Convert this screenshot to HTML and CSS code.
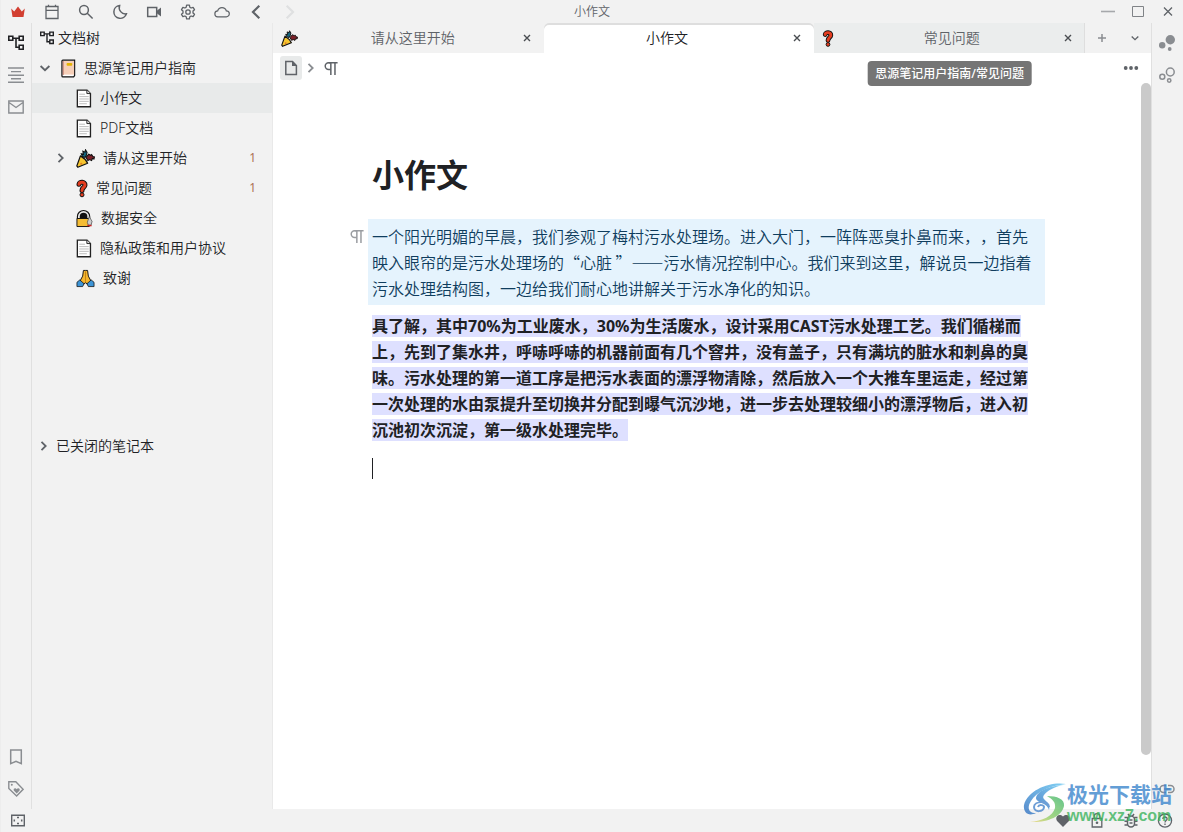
FILE: index.html
```html
<!DOCTYPE html>
<html lang="zh-CN">
<head>
<meta charset="utf-8">
<title>小作文</title>
<link rel="stylesheet" href="styles.css">
</head>
<body>
<svg class="sprite" aria-hidden="true">
  <symbol id="tree" viewBox="0 0 16 16"><path fill="none" stroke="currentColor" stroke-width="1.6" d="M.8 1.300h4v4h-4zM11.200 1.300h4v4h-4zM11.200 10.200h4v4h-4zM5 3.300h6M8 3.300v8.900h3"/></symbol>
  <symbol id="chev-r" viewBox="0 0 16 16"><path fill="none" stroke="currentColor" stroke-width="1.8" d="M5.500 3.800 9.700 8l-4.200 4.200"/></symbol>
  <symbol id="chev-d" viewBox="0 0 16 16"><path fill="none" stroke="currentColor" stroke-width="1.8" d="M3.600 6 8 10.200 12.400 6"/></symbol>
  <symbol id="close" viewBox="0 0 16 16"><path fill="none" stroke="currentColor" stroke-width="1.4" d="m4 5 6 6M10 5l-6 6"/></symbol>
  <symbol id="para" viewBox="0 0 16 16"><path fill="none" stroke="currentColor" stroke-width="1.6" d="M5 1.800h9.500M7.300 1.800V15M11.700 1.800V15"/><path fill="none" stroke="currentColor" stroke-width="1.600" d="M7 1.800H4.900a3.600 3.600 0 0 0 0 7.200h2.400"/></symbol>
  <symbol id="page" viewBox="0 0 16 20"><path fill="#fff" stroke="#222" stroke-width="1.4" d="M1 1.200h10.200l3.600 3.500v14H1z"/><path fill="#ddd" stroke="#222" d="M11 1.200v3.600h3.800"/><path stroke="#bbb" d="M3 5.500h6M3 8h10M3 10.500h10M3 13h10M3 15.500h8"/></symbol>
  <symbol id="party" viewBox="0 0 18 18"><path fill="#15657d" stroke="#111" d="M5 4.500 7 5 6.500 2l2 1L9 .8l1.500 2.400L9.800 6 8.500 8 6 7z"/><path fill="#7b2028" stroke="#111" d="m9.500 8 2.500-3 2 1 .8-.8 1.200 2 1.500.3-.5 2-1.500-.5-.7 2-2-1-1.500 1z"/><path fill="#f6c52f" stroke="#111" stroke-width="1.200" stroke-linejoin="round" d="M4.200 6.500C6 7.500 9.600 10.500 11 13.500L1.700 17.300.8 16z"/><circle cx="5" cy="14" r="1" fill="#e07b25"/></symbol>
  <symbol id="quest" viewBox="0 0 12 18"><path fill="none" stroke="#111" stroke-width="5" stroke-linecap="round" d="M3 4.800C3.300 2 9.300 2 9 5.600 8.800 8 6 8 6 11"/><path fill="none" stroke="#e43d20" stroke-width="3" stroke-linecap="round" d="M3 4.800C3.300 2 9.300 2 9 5.600 8.800 8 6 8 6 11"/><circle cx="6" cy="15.300" r="2" fill="#e43d20" stroke="#111"/></symbol>
</svg>
<div class="app">
  <header class="toolbar">
    <nav class="tools">
      <button class="tool" aria-label="会员"><svg class="i16" viewBox="0 0 16 16"><path fill="#d23f31" d="m1.200 4.500 3 3L8 2.500l3.800 5 3-3L13.500 13h-11z"/></svg></button>
      <button class="tool" aria-label="日记"><svg class="i16" viewBox="0 0 16 16"><path fill="none" stroke="currentColor" stroke-width="1.300" d="M2 2.500h12v12H2zM2 6.300h12M4.500.8v1.700M11.500.8v1.700"/></svg></button>
      <button class="tool" aria-label="搜索"><svg class="i16" viewBox="0 0 16 16"><path fill="none" stroke="currentColor" stroke-width="1.500" d="M10.400 6a4.400 4.400 0 1 1-8.800 0 4.400 4.400 0 0 1 8.800 0zM9.300 9.200l5.300 5.300"/></svg></button>
      <button class="tool" aria-label="主题"><svg class="i16" viewBox="0 0 16 16"><path fill="none" stroke="currentColor" stroke-width="1.500" d="M7.600 1.600a6.400 6.400 0 1 0 6.800 8.200A6.200 6.200 0 0 1 7.600 1.600z"/></svg></button>
      <button class="tool" aria-label="录制"><svg class="i16" viewBox="0 0 16 16"><path fill="none" stroke="currentColor" stroke-width="1.500" d="M1.700 3.500h9v9h-9z"/><path fill="currentColor" d="M10.500 7 15 3.500v9L10.500 9z"/></svg></button>
      <button class="tool" aria-label="设置"><svg class="i16" viewBox="0 0 16 16"><path fill="none" stroke="currentColor" stroke-width="1.300" stroke-linejoin="round" d="M6.600 1.200h2.800l.4 2 1.300.8 2-.7 1.400 2.400L13 7.100v1.800l1.500 1.400-1.400 2.400-2-.7-1.300.8-.4 2H6.600l-.4-2-1.300-.8-2 .7-1.400-2.400L3 8.900V7.100L1.500 5.700l1.400-2.400 2 .7 1.300-.8z"/><circle cx="8" cy="8" r="2.200" fill="none" stroke="currentColor" stroke-width="1.300"/></svg></button>
      <button class="tool" aria-label="云端"><svg class="i16" viewBox="0 0 16 16"><path fill="none" stroke="currentColor" stroke-width="1.200" d="M4 12.800a3 3 0 0 1-.3-6 4.500 4.500 0 0 1 8.600 0 3 3 0 0 1 0 6z"/></svg></button>
      <button class="tool" aria-label="后退"><svg class="i16" viewBox="0 0 16 16"><path fill="none" stroke="currentColor" stroke-width="2.200" d="M11.300 1.800 5 8l6.300 6.200"/></svg></button>
      <button class="tool off" aria-label="前进" disabled><svg class="i16" viewBox="0 0 16 16"><path fill="none" stroke="currentColor" stroke-width="2.200" d="M4.700 1.800 11 8l-6.300 6.200"/></svg></button>
    </nav>
    <div class="wtitle">小作文</div>
    <div class="winctl">
      <button aria-label="最小化"><svg class="i16" viewBox="0 0 16 16"><path stroke="#a6a8ab" stroke-width="1.600" d="M1 7.500h14"/></svg></button>
      <button aria-label="最大化"><svg class="i16" viewBox="0 0 16 16"><path fill="none" stroke="#808387" d="M2.500 2.500h11v10h-11z"/></svg></button>
      <button aria-label="关闭"><svg class="i16" viewBox="0 0 16 16"><path stroke="currentColor" stroke-width="1.300" d="m4 3.500 8 8M12 3.500l-8 8"/></svg></button>
    </div>
  </header>

  <div class="body">
    <nav class="dock left">
      <button class="on" aria-label="文档树"><svg class="i16"><use href="#tree"/></svg></button>
      <button aria-label="大纲"><svg class="i16" viewBox="0 0 16 16"><path stroke="currentColor" stroke-width="1.400" d="M0 1h16M3 4.600h10M0 8.200h16M3 11.800h10M0 15.300h16"/></svg></button>
      <button aria-label="收集箱"><svg class="i16" viewBox="0 0 16 16"><path fill="none" stroke="currentColor" stroke-width="1.400" d="M.8 2h14.400v12H.8zM1 3.500l7 5 7-5"/></svg></button>
      <span class="grow"></span>
      <button aria-label="书签"><svg class="i16" viewBox="0 0 16 16"><path fill="none" stroke="currentColor" stroke-width="1.500" d="M2.700 1h10.600v13.700L8 12.300l-5.300 2.400z"/></svg></button>
      <button aria-label="标签"><svg class="i16" viewBox="0 0 16 16"><path fill="none" stroke="currentColor" stroke-width="1.400" d="M.8.8h7l7.300 7.500-6.500 6.700L.8 7.500z"/><circle cx="3.800" cy="3.800" r="1" fill="currentColor"/><path fill="currentColor" d="M8.700 12.500 5.800 9.500c-.8-2.300 2-3 2.900-1.200.9-1.800 3.700-1.100 2.900 1.200z"/></svg></button>
    </nav>

    <aside class="panel">
      <h2 class="phead"><svg class="i14"><use href="#tree"/></svg>文档树</h2>
      <ul class="files">
        <li class="row book"><svg class="i16 arrow"><use href="#chev-d"/></svg><svg class="emoji book-ic" viewBox="0 0 16 20"><path fill="#fff" stroke="#111" stroke-width="1.300" d="M1 2Q1 1 2 1h12.500v16.500l-1 1.500H2Q1 19 1 18z"/><path fill="#f6cfb8" d="M2.500 2H14v14.500H2.500z"/><path stroke="#a33b2b" stroke-width=".7" d="M2.300 2v15"/><rect x="6" y="4" width="6" height="3" rx="1" fill="#e5b400"/></svg><a href="#guide">思源笔记用户指南</a></li>
        <li class="row doc cur"><svg class="emoji w16"><use href="#page"/></svg><a href="#essay">小作文</a></li>
        <li class="row doc"><svg class="emoji w16"><use href="#page"/></svg><a href="#pdf">PDF文档</a></li>
        <li class="row doc"><svg class="i16 fold"><use href="#chev-r"/></svg><svg class="emoji w19"><use href="#party"/></svg><a href="#start">请从这里开始</a><span class="count">1</span></li>
        <li class="row doc"><svg class="emoji w12"><use href="#quest"/></svg><a href="#faq">常见问题</a><span class="count">1</span></li>
        <li class="row doc"><svg class="emoji w17" viewBox="0 0 18 20"><path fill="#e9e9e9" stroke="#111" stroke-width="1.200" d="M1.500 10V8a6.500 6.500 0 0 1 13 0v2z"/><path fill="#111" d="M4 10V8a4 4 0 0 1 8 0v2z"/><path fill="#f5bd35" stroke="#111" d="M1 10h13v8.500H1z"/><path fill="#ccc" stroke="#555" stroke-width=".8" d="m14 8 3 5-1 4h-3l-1-3z"/><path stroke="#c22" stroke-width="1.500" d="M12 17.500h4.500"/></svg><a href="#safe">数据安全</a></li>
        <li class="row doc"><svg class="emoji w16"><use href="#page"/></svg><a href="#privacy">隐私政策和用户协议</a></li>
        <li class="row doc"><svg class="emoji w19" viewBox="0 0 20 19"><path fill="#f5b52e" stroke="#111" stroke-linejoin="round" d="M9.700 1H7.800L7 7l-3 5.500 3 3.500 3-2 3 2 3-3.500L13 7l-.8-6h-1.900z"/><path stroke="#b5750f" stroke-width=".8" d="M10 2v11"/><path fill="#3d94d6" stroke="#111" stroke-width=".8" d="m1 13.500 3-2.500 4.500 4-1.500 3H1zM19 13.500 16 11l-4.500 4 1.500 3h6z"/></svg><a href="#thanks">致谢</a></li>
      </ul>
      <button class="row closed"><svg class="i16"><use href="#chev-r"/></svg>已关闭的笔记本</button>
    </aside>

    <main class="center">
      <div class="tabs">
        <div class="tab"><svg class="tic w17"><use href="#party"/></svg><span class="tname">请从这里开始</span><button aria-label="关闭"><svg class="i16"><use href="#close"/></svg></button></div>
        <div class="tab active"><span class="tname">小作文</span><button aria-label="关闭"><svg class="i16"><use href="#close"/></svg></button></div>
        <div class="tab hover"><svg class="tic w12"><use href="#quest"/></svg><span class="tname">常见问题</span><button aria-label="关闭"><svg class="i16"><use href="#close"/></svg></button>
          <div class="tip" role="tooltip">思源笔记用户指南/常见问题</div></div>
        <div class="tabctl">
          <button class="add" aria-label="新标签"><svg class="i16" viewBox="0 0 16 16"><path stroke="currentColor" stroke-width="1.500" d="M8 4v8M4 8h8"/></svg></button>
          <button aria-label="更多标签"><svg class="i12"><use href="#chev-d"/></svg></button>
        </div>
      </div>
      <div class="crumbs">
        <button class="docbtn" aria-label="文档"><svg class="i16" viewBox="0 0 16 16"><path fill="none" stroke="currentColor" stroke-width="1.500" d="M2.800 1.500h6.700l3.900 4v9H2.800z"/><path fill="currentColor" d="M9 1v5h5z"/></svg></button>
        <svg class="i16 sep"><use href="#chev-r"/></svg>
        <svg class="i15"><use href="#para"/></svg>
        <span class="grow"></span>
        <button class="more" aria-label="更多"><svg class="i16" viewBox="0 0 16 16"><g fill="currentColor"><circle cx="2.700" cy="8" r="1.900"/><circle cx="8" cy="8" r="1.900"/><circle cx="13.300" cy="8" r="1.900"/></g></svg></button>
      </div>
      <div class="scroll">
        <article class="doc-body">
          <h1>小作文</h1>
          <div class="blk info"><svg class="i15 gutter"><use href="#para"/></svg>一个阳光明媚的早晨，我们参观了梅村污水处理场。进入大门，一阵阵恶臭扑鼻而来，，首先映入眼帘的是污水处理场的“心脏 ”——污水情况控制中心。我们来到这里，解说员一边指着污水处理结构图，一边给我们耐心地讲解关于污水净化的知识。</div>
          <div class="blk"><strong class="mark">具了解，其中70%为工业废水，30%为生活废水，设计采用CAST污水处理工艺。我们循梯而上，先到了集水井，呼哧呼哧的机器前面有几个窨井，没有盖子，只有满坑的脏水和刺鼻的臭味。污水处理的第一道工序是把污水表面的漂浮物清除，然后放入一个大推车里运走，经过第一次处理的水由泵提升至切换井分配到曝气沉沙地，进一步去处理较细小的漂浮物后，进入初沉池初次沉淀，第一级水处理完毕。</strong></div>
          <div class="blk empty"><span class="caret"></span></div>
        </article>
        <div class="bar"><div class="thumb"></div></div>
      </div>
    </main>

    <nav class="dock right">
      <button aria-label="关系图"><svg class="i16" viewBox="0 0 16 16"><g fill="currentColor"><circle cx="11.300" cy="4.700" r="4.700"/><circle cx="3.200" cy="10.300" r="3.200"/><circle cx="10.700" cy="14" r="1.900"/></g></svg></button>
      <button aria-label="全局关系图"><svg class="i16" viewBox="0 0 16 16"><g fill="none" stroke="currentColor" stroke-width="1.500"><circle cx="11.300" cy="5" r="3.900"/><circle cx="3.300" cy="9.800" r="2.500"/><circle cx="10.200" cy="13.500" r="1.700"/></g></svg></button>
      <span class="grow"></span>
      <button aria-label="反向链接"><svg class="i16" viewBox="0 0 16 16"><path fill="none" stroke="currentColor" stroke-width="1.500" d="M7 11.500H4.500a3.500 3.500 0 0 1 0-7H7M9 4.500h2.500a3.500 3.500 0 0 1 0 7H9M5 8h6"/></svg></button>
    </nav>
  </div>

  <footer class="status">
    <button aria-label="隐藏停靠栏"><svg class="i16" viewBox="0 0 16 16"><path fill="none" stroke="currentColor" stroke-width="1.400" d="M1.700 2.200h12.600v10.600H1.700z"/><path stroke="currentColor" stroke-width="1.500" d="M7 4.500h2M7 10.500h2M4.300 6.500v2M11.700 6.500v2"/></svg></button>
    <span class="grow"></span>
    <button aria-label="赞助"><svg class="i16" viewBox="0 0 16 16"><path fill="currentColor" d="M8 14 2.300 8.200C-.8 4.500 3.500-.7 8 3.500c4.500-4.200 8.800 1 5.700 4.700z"/></svg></button>
    <button aria-label="锁屏"><svg class="i16" viewBox="0 0 16 16"><path fill="none" stroke="currentColor" stroke-width="1.300" d="M3.200 5.500h9.600V14H3.200zM5.200 5.500v-2a2.800 2.800 0 0 1 5.600 0v2"/><circle cx="8" cy="9.700" r="1.300" fill="currentColor"/></svg></button>
    <button aria-label="调试"><svg class="i16" viewBox="0 0 16 16"><path fill="none" stroke="currentColor" stroke-width="1.500" d="M4.500 6.500a3.500 3.500 0 0 1 7 0v4a3.500 3.500 0 0 1-7 0zM1.500 4.500h3M1.500 8.300h3M1.500 12h3M11.500 4.500h3M11.500 8.300h3M11.500 12h3M5 1l1.500 2M11 1 9.500 3M6.500 7h3M6.500 10h3"/></svg></button>
    <button aria-label="帮助"><svg class="i16" viewBox="0 0 16 16"><circle cx="8" cy="7.600" r="6.600" fill="none" stroke="currentColor" stroke-width="1.300"/><path fill="none" stroke="currentColor" stroke-width="1.300" d="M5.900 6.100c0-2.800 4.200-2.700 4.200-.2C10.100 7.600 8 7.500 8 9.400M8 10.600v1.500"/></svg></button>
  </footer>

  <div class="wm">
    <svg class="wm-logo" viewBox="0 0 44 42">
      <defs>
        <linearGradient id="wa" x1="0" y1="1" x2="1" y2="0"><stop offset="0" stop-color="#2f6fc0"/><stop offset="1" stop-color="#62c6f2"/></linearGradient>
        <linearGradient id="wb" x1="1" y1="0" x2="0" y2="1"><stop offset="0" stop-color="#3fb56e"/><stop offset=".6" stop-color="#8fd06a"/><stop offset="1" stop-color="#f0d36a"/></linearGradient>
      </defs>
      <path fill="url(#wa)" d="M43 2C29-1 5 7 1 23c-1 7 4 12 12 8C5 31 4 25 8 19 14 9 27 4 43 2z"/>
      <path fill="url(#wa)" d="M40 3C26 4 14 9 13 16c0 5 11 4 13 12 1-3 0-6-2-8-3-3-5-4-3-7 3-4 10-8 19-10z"/>
      <path fill="url(#wb)" d="M24 14c10 0 18 3 17 10-2 11-18 17-34 16 12-1 23-6 25-14 1-6-3-9-8-12z"/>
      <path fill="none" stroke="#4a86cc" stroke-width="2" d="M26 25c0-7-15-6-15 0 0 6 10 5 10 0 0-2-5-3-6 0"/>
    </svg>
    <div class="wm-text"><span class="wm-name">极光下载站</span><span class="wm-url">www.xz7.com</span></div>
  </div>
</div>
</body>
</html>
```
FILE: styles.css
```css
* { box-sizing: border-box; }
body {
  margin: 0;
  background: #f2f2f2;
  color: #202124;
  font: 350 14px/20px "Noto Sans", "Noto Sans CJK SC", sans-serif;
  text-spacing-trim: space-all;
}
h1, h2, ul { margin: 0; padding: 0; font-weight: inherit; }
ul { list-style: none; }
a { color: inherit; text-decoration: none; }
button {
  display: flex;
  align-items: center;
  justify-content: center;
  padding: 0;
  border: 0;
  background: none;
  color: inherit;
  font: inherit;
}
svg { display: block; flex: none; }
.sprite { position: absolute; width: 0; height: 0; }
.i12 { width: 12px; height: 12px; }
.i14 { width: 14px; height: 14px; }
.i15 { width: 15px; height: 15px; }
.i16 { width: 16px; height: 16px; }
.grow { flex: 1; }

.app {
  position: relative;
  display: grid;
  grid-template-rows: 23px 1fr 23px;
  height: 100vh;
  overflow: hidden;
  border-left: 1px solid #ededed;
}

/* top bar */
.toolbar {
  display: grid;
  grid-template-columns: 1fr auto 1fr;
  align-items: center;
  color: #5f6368;
}
.tools { display: flex; }
.tool { width: 34px; height: 23px; }
.off { color: #dfe0e1; }
.wtitle { font-size: 12px; }
.winctl { display: flex; justify-content: flex-end; }
.winctl button { width: 30px; height: 23px; }

.body { display: flex; min-height: 0; }

/* side docks */
.dock {
  display: flex;
  flex-direction: column;
  width: 32px;
  padding: 4px 0;
  color: #8a8d91;
}
.dock button { height: 32px; }
.dock .on { color: #202124; }
.left { width: 31px; border-right: 1px solid #e0e0e0; }
.right { padding-right: 1px; border-left: 1px solid #e0e0e0; }

/* file panel */
.panel { width: 241px; border-right: 1px solid #e9e9e9; }
.phead {
  display: flex;
  align-items: center;
  gap: 4px;
  height: 30px;
  padding-left: 8px;
  font-size: 14px;
}
.row { display: flex; align-items: center; width: 100%; height: 30px; }
.emoji { height: 19px; }
.w12 { width: 12px; }
.w16 { width: 16px; }
.w17 { width: 17px; }
.w19 { width: 19px; }
.arrow { margin: 0 8px 0 5px; color: #5f6368; }
.book-ic { width: 15px; margin-right: 8px; }
.doc { position: relative; gap: 8px; padding: 0 16px 0 44px; }
.doc a { flex: 1; }
.fold { position: absolute; left: 21px; color: #5f6368; }
.cur { background: #e8eaea; }
.count { color: #ad7152; font-size: 12px; font-weight: 400; }
.closed { justify-content: flex-start; gap: 4px; margin-top: 138px; padding-left: 4px; }
.closed svg { color: #5f6368; }

/* tabs */
.center { display: flex; flex: 1; flex-direction: column; min-width: 0; background: #fff; }
.tabs { display: flex; height: 30px; background: #f2f2f2; }
.tab { position: relative; display: flex; flex: 1; align-items: center; padding-right: 8px; color: #5f6368; }
.tab button { color: #4a4d51; }
.tic { height: 17px; margin: 0 8px; }
.tname { flex: 1; text-align: center; }
.active {
  background: #fff;
  color: #202124;
  box-shadow: inset 0 2px #dedede;
  border-radius: 5px 5px 0 0;
}
.hover { background: #ebeded; box-shadow: inset -1px 0 #dedede; }
.tip {
  position: absolute;
  z-index: 2;
  top: 38px;
  left: 50%;
  transform: translateX(-50%);
  padding: 4px 8px 3px;
  border-radius: 4px;
  background: #757575;
  color: #fff;
  font-size: 12px;
  font-weight: 500;
  line-height: 18px;
  white-space: nowrap;
}
.tabctl { display: flex; color: #5f6368; }
.tabctl button { width: 33px; height: 30px; }
.add { color: #8a8d91; }

/* breadcrumb */
.crumbs { display: flex; align-items: center; height: 30px; padding: 0 12px 0 7px; color: #5f6368; }
.docbtn { width: 22px; height: 24px; border-radius: 3px; background: #e8eaea; }
.sep { margin: 0 5px 0 1px; color: #8a8d91; }

/* editor */
.scroll { display: flex; flex: 1; min-height: 0; }
.doc-body { flex: 1; padding: 70px 96px 0 95px; font-size: 16px; line-height: 26px; }
.doc-body h1 { margin-bottom: 22px; padding: 0 4px; font-size: 32px; font-weight: 700; line-height: 44px; }
.blk { position: relative; margin-bottom: 4px; padding: 4px; }
.info { background: #e5f3fd; color: #0f3d5e; font-family: "Noto Sans CJK SC", sans-serif; }
.gutter { position: absolute; top: 10px; left: -18px; color: #9a9da1; }
.mark { background: #dee0ff; font-weight: 700; }
.empty { display: flex; align-items: center; height: 34px; }
.caret { width: 1px; height: 21px; background: #202124; }
.bar { width: 10px; }
.thumb { height: 92.5%; border-radius: 5px; background: #cacaca; }

/* bottom bar */
.status { display: flex; align-items: center; padding-right: 1px; color: #5f6368; }
.status button { width: 34px; height: 23px; }

/* site badge */
.wm { position: absolute; right: 11px; bottom: 6px; display: flex; opacity: .8; pointer-events: none; }
.wm-logo { width: 44px; height: 42px; }
.wm-text { display: flex; flex-direction: column; }
.wm-name { color: #3d86cd; font-size: 21px; font-weight: 700; line-height: 24px; }
.wm-url { color: #3eb45e; font: 700 16px/20px "Liberation Sans", sans-serif; }
```
